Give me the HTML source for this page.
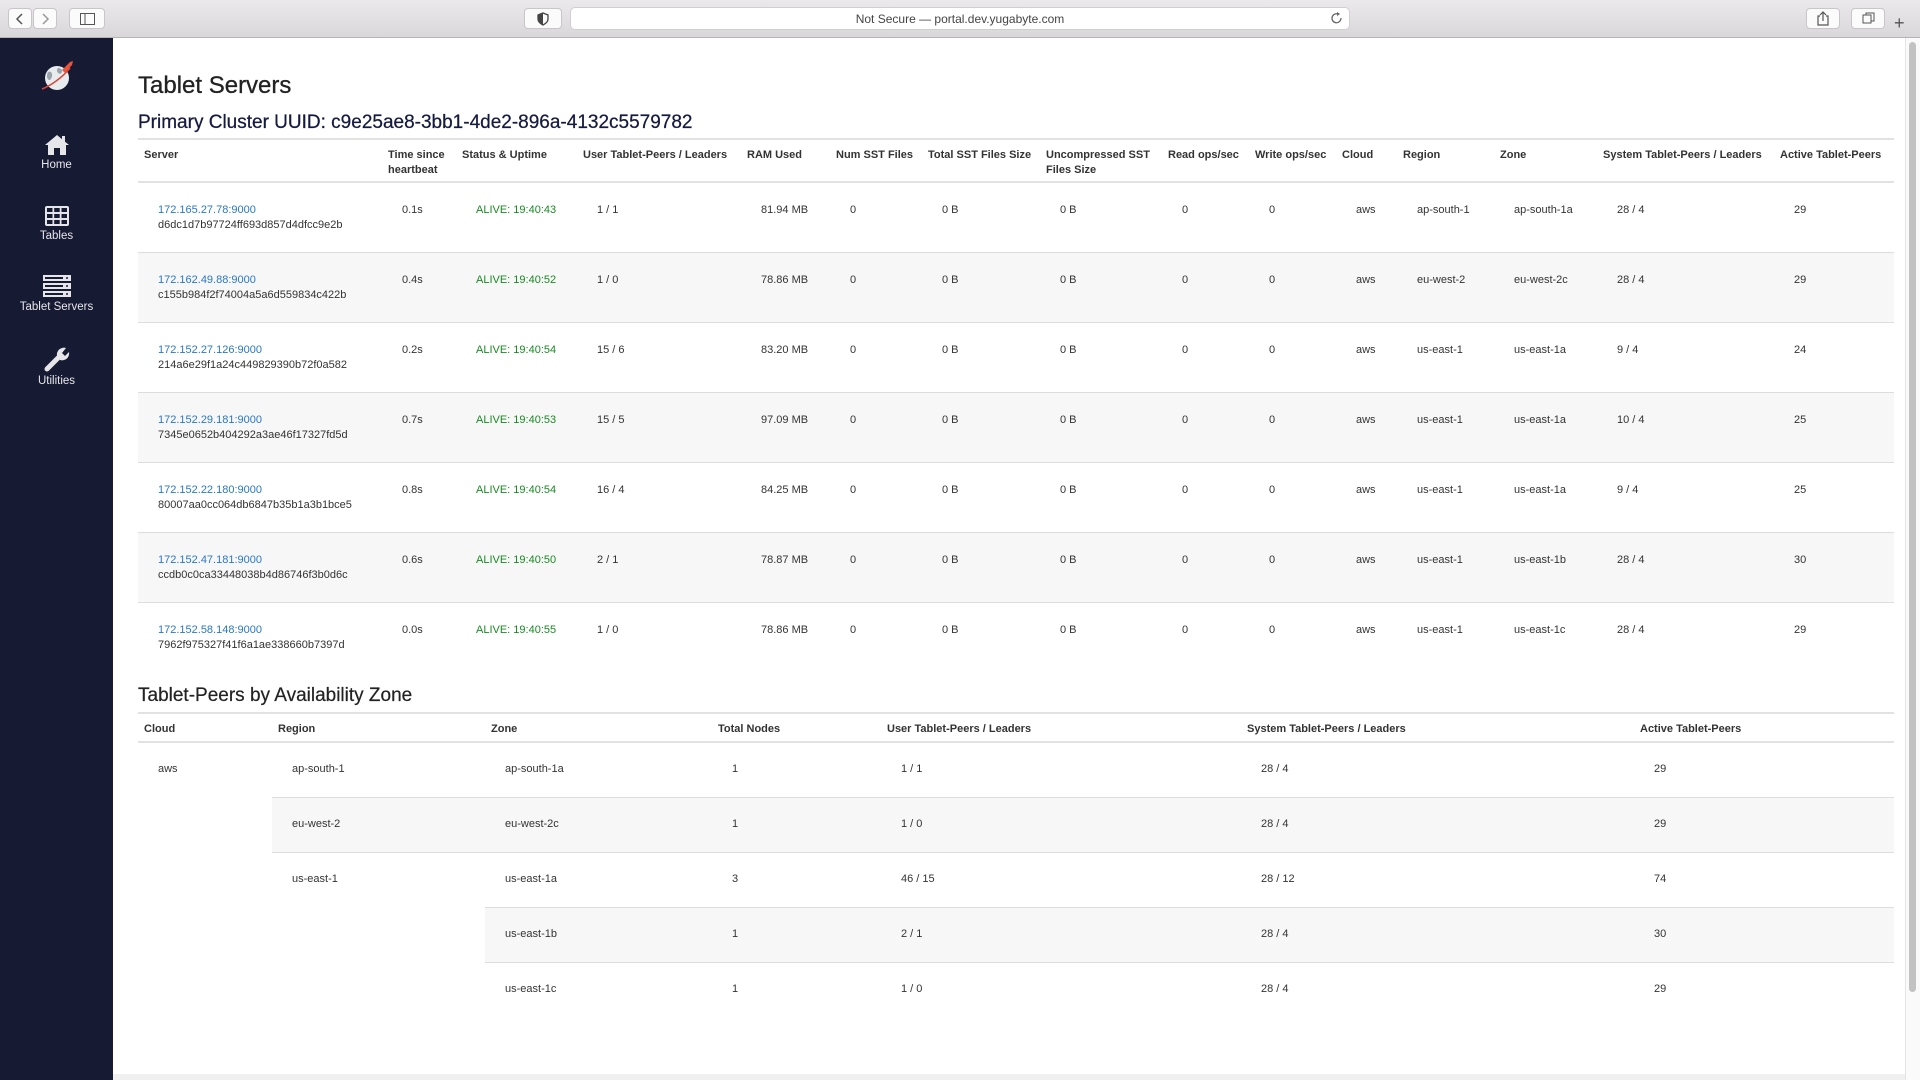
<!DOCTYPE html>
<html><head><meta charset="utf-8">
<style>
*{box-sizing:border-box;margin:0;padding:0}
body{width:1920px;height:1080px;overflow:hidden;background:#fff;font-family:"Liberation Sans",Arial,sans-serif;color:#333;position:relative}
.top{position:absolute;left:0;top:0;width:1920px;height:38px;background:linear-gradient(#ebe9eb,#d9d7d9);border-bottom:1px solid #b5b3b5}
.btn{position:absolute;top:8px;height:21px;background:#fbfbfb;border:1px solid #c8c6c8;border-radius:4px}
.url{position:absolute;left:570px;top:7px;width:780px;height:23px;background:#fff;border:1px solid #d0ced0;border-radius:5px;font-size:12px;color:#444;text-align:center;line-height:22px}
.side{position:absolute;left:0;top:38px;width:113px;height:1042px;background:#161a33}
.nav{position:absolute;left:0;width:113px;text-align:center;color:#e6e6ea;font-size:11.5px}
.nav svg{display:block;margin:0 auto 3px}
.sb{position:absolute;left:1905px;top:38px;width:15px;height:1042px;background:#fafafa;border-left:1px solid #e4e4e4}
.sb div{position:absolute;left:3px;top:4px;width:7px;height:950px;background:#c2c2c2;border-radius:4px}
h1{position:absolute;left:138px;top:72px;font-size:24px;font-weight:normal;color:#222;-webkit-text-stroke:.3px #222}
h2{position:absolute;left:138px;top:112px;font-size:19px;font-weight:normal;color:#151a40;-webkit-text-stroke:.25px #151a40}
h3{position:absolute;left:138px;top:685px;font-size:19px;font-weight:normal;color:#222;-webkit-text-stroke:.2px #222}
table{position:absolute;left:138px;border-collapse:collapse;table-layout:fixed;font-size:11px}
th{font-weight:bold;text-align:left;vertical-align:top;padding:8px 6px 0;color:#333;line-height:15px;font-size:11px}
thead tr{border-top:2px solid #e2e2e2;border-bottom:2px solid #e2e2e2}
#t1{top:138px;width:1756px}
#t1 thead tr{height:43px}
#t1 td{height:70px;padding-left:20px;padding-top:20px;vertical-align:top;border-top:1px solid #ddd;line-height:15px;color:#333}
#t1 tbody tr:nth-child(even) td{background:#f7f7f7}
a{color:#2a78c4;text-decoration:none}
#t1 td.g{color:#1a8a24}
#t2{top:712px;width:1756px}
#t2 thead tr{height:29px}
#t2 th{padding-top:8px}
#t2 td{height:55px;padding-left:20px;padding-bottom:2px;vertical-align:middle;border-top:1px solid #ddd;color:#333}
#t2 td.r{vertical-align:top;padding-top:20px;border-top:none}
#t2 tr.s td{background:#f7f7f7}
</style></head><body>
<div class="top">
 <div class="btn" style="left:8px;width:24px"></div><div class="btn" style="left:33px;width:24px"></div>
 <svg style="position:absolute;left:14px;top:12px" width="12" height="14"><path d="M8 2 L3 7 L8 12" stroke="#555" stroke-width="1.5" fill="none"/></svg>
 <svg style="position:absolute;left:40px;top:12px" width="12" height="14"><path d="M3 2 L8 7 L3 12" stroke="#999" stroke-width="1.5" fill="none"/></svg>
 <div class="btn" style="left:69px;width:36px"></div>
 <svg style="position:absolute;left:80px;top:13px" width="15" height="12"><rect x=".5" y=".5" width="14" height="11" fill="none" stroke="#555"/><line x1="5" y1="0" x2="5" y2="12" stroke="#555"/></svg>
 <div class="btn" style="left:524px;width:38px"></div>
 <svg style="position:absolute;left:537px;top:12px" width="12" height="14"><path d="M6 1 L11 3 V7 C11 10 8 12 6 13 C4 12 1 10 1 7 V3 Z" fill="none" stroke="#444" stroke-width="1.3"/><path d="M6 1 V13 C4 12 1 10 1 7 V3Z" fill="#444"/></svg>
 <div class="url">Not Secure — portal.dev.yugabyte.com</div>
 <svg style="position:absolute;left:1331px;top:12px" width="12" height="13"><path d="M10 6 A4.5 4.5 0 1 1 7 2" fill="none" stroke="#666" stroke-width="1.3"/><path d="M6 0 L9 2 L6 4Z" fill="#666"/></svg>
 <div class="btn" style="left:1806px;width:34px"></div><div class="btn" style="left:1851px;width:34px"></div>
 <svg style="position:absolute;left:1817px;top:11px" width="12" height="15"><path d="M3 5 H1 V14 H11 V5 H9 M6 10 V1 M3 4 L6 1 L9 4" fill="none" stroke="#555" stroke-width="1.2"/></svg>
 <svg style="position:absolute;left:1862px;top:12px" width="13" height="13"><rect x="1" y="3" width="8" height="8" fill="none" stroke="#555"/><path d="M4 3 V1 H12 V9 H9" fill="none" stroke="#555"/></svg>
 <div style="position:absolute;left:1894px;top:14px;font-size:18px;color:#555;line-height:18px">+</div>
</div>
<div class="side">
 <svg style="position:absolute;left:40px;top:22px" width="36" height="32" viewBox="0 0 36 32">
  <circle cx="17" cy="18" r="12" fill="#e8ecef"/><path d="M8 12 C12 10 14 16 10 20 C7 20 6 16 8 12Z M18 8 C22 8 24 12 20 14 C17 13 16 10 18 8Z" fill="#9aa4ab"/>
  <path d="M2 29 C10 26 22 18 30 8" stroke="#d9483b" stroke-width="1.5" fill="none"/><path d="M22 10 L30 2 L33 1 L32 5 L25 13Z" fill="#e8553e"/>
 </svg>
 <div class="nav" style="top:96px"><svg width="26" height="22" viewBox="0 0 26 22"><path d="M13 1 L1 11 H4 V21 H10 V14 H16 V21 H22 V11 H25Z" fill="#e6e6ea"/><rect x="18" y="2" width="3" height="6" fill="#e6e6ea"/></svg>Home</div>
 <div class="nav" style="top:167px"><svg width="26" height="22" viewBox="0 0 26 22"><rect x="1" y="1" width="24" height="20" rx="2" fill="#e6e6ea"/><g fill="#161a33"><rect x="3" y="3" width="5.5" height="4"/><rect x="10.2" y="3" width="5.5" height="4"/><rect x="17.5" y="3" width="5.5" height="4"/><rect x="3" y="9" width="5.5" height="4"/><rect x="10.2" y="9" width="5.5" height="4"/><rect x="17.5" y="9" width="5.5" height="4"/><rect x="3" y="15" width="5.5" height="4"/><rect x="10.2" y="15" width="5.5" height="4"/><rect x="17.5" y="15" width="5.5" height="4"/></g></svg>Tables</div>
 <div class="nav" style="top:236px"><svg width="28" height="24" viewBox="0 0 28 24"><g fill="#e6e6ea"><rect x="0" y="1" width="28" height="6"/><rect x="0" y="9" width="28" height="6"/><rect x="0" y="17" width="28" height="6"/></g><g fill="#161a33"><rect x="2" y="3" width="18" height="2"/><rect x="2" y="11" width="18" height="2"/><rect x="2" y="19" width="18" height="2"/><circle cx="24" cy="4" r="1"/><circle cx="24" cy="12" r="1"/><circle cx="24" cy="20" r="1"/></g></svg>Tablet Servers</div>
 <div class="nav" style="top:309px"><svg width="26" height="25" viewBox="0 0 26 25"><path d="M3 22 L14 11" stroke="#e6e6ea" stroke-width="5" stroke-linecap="round"/><path d="M13 9 A7 7 0 0 1 22 1 L18 6 L21 9 L25 5 A7 7 0 0 1 16 13Z" fill="#e6e6ea"/></svg>Utilities</div>
</div>
<div class="sb"><div></div></div>
<div style="position:absolute;left:113px;top:1074px;width:1792px;height:6px;background:#f0f0f0"></div>

<h1>Tablet Servers</h1>
<h2>Primary Cluster UUID: c9e25ae8-3bb1-4de2-896a-4132c5579782</h2>
<table id="t1">
<colgroup><col style="width:244px"><col style="width:74px"><col style="width:121px"><col style="width:164px"><col style="width:89px"><col style="width:92px"><col style="width:118px"><col style="width:122px"><col style="width:87px"><col style="width:87px"><col style="width:61px"><col style="width:97px"><col style="width:103px"><col style="width:177px"><col style="width:120px"></colgroup>
<thead><tr><th>Server</th><th>Time since heartbeat</th><th>Status &amp; Uptime</th><th>User Tablet-Peers / Leaders</th><th>RAM Used</th><th>Num SST Files</th><th>Total SST Files Size</th><th>Uncompressed SST Files Size</th><th>Read ops/sec</th><th>Write ops/sec</th><th>Cloud</th><th>Region</th><th>Zone</th><th>System Tablet-Peers / Leaders</th><th>Active Tablet-Peers</th></tr></thead>
<tbody>
<tr><td><a>172.165.27.78:9000</a><br>d6dc1d7b97724ff693d857d4dfcc9e2b</td><td>0.1s</td><td class="g">ALIVE: 19:40:43</td><td>1 / 1</td><td>81.94 MB</td><td>0</td><td>0 B</td><td>0 B</td><td>0</td><td>0</td><td>aws</td><td>ap-south-1</td><td>ap-south-1a</td><td>28 / 4</td><td>29</td></tr>
<tr><td><a>172.162.49.88:9000</a><br>c155b984f2f74004a5a6d559834c422b</td><td>0.4s</td><td class="g">ALIVE: 19:40:52</td><td>1 / 0</td><td>78.86 MB</td><td>0</td><td>0 B</td><td>0 B</td><td>0</td><td>0</td><td>aws</td><td>eu-west-2</td><td>eu-west-2c</td><td>28 / 4</td><td>29</td></tr>
<tr><td><a>172.152.27.126:9000</a><br>214a6e29f1a24c449829390b72f0a582</td><td>0.2s</td><td class="g">ALIVE: 19:40:54</td><td>15 / 6</td><td>83.20 MB</td><td>0</td><td>0 B</td><td>0 B</td><td>0</td><td>0</td><td>aws</td><td>us-east-1</td><td>us-east-1a</td><td>9 / 4</td><td>24</td></tr>
<tr><td><a>172.152.29.181:9000</a><br>7345e0652b404292a3ae46f17327fd5d</td><td>0.7s</td><td class="g">ALIVE: 19:40:53</td><td>15 / 5</td><td>97.09 MB</td><td>0</td><td>0 B</td><td>0 B</td><td>0</td><td>0</td><td>aws</td><td>us-east-1</td><td>us-east-1a</td><td>10 / 4</td><td>25</td></tr>
<tr><td><a>172.152.22.180:9000</a><br>80007aa0cc064db6847b35b1a3b1bce5</td><td>0.8s</td><td class="g">ALIVE: 19:40:54</td><td>16 / 4</td><td>84.25 MB</td><td>0</td><td>0 B</td><td>0 B</td><td>0</td><td>0</td><td>aws</td><td>us-east-1</td><td>us-east-1a</td><td>9 / 4</td><td>25</td></tr>
<tr><td><a>172.152.47.181:9000</a><br>ccdb0c0ca33448038b4d86746f3b0d6c</td><td>0.6s</td><td class="g">ALIVE: 19:40:50</td><td>2 / 1</td><td>78.87 MB</td><td>0</td><td>0 B</td><td>0 B</td><td>0</td><td>0</td><td>aws</td><td>us-east-1</td><td>us-east-1b</td><td>28 / 4</td><td>30</td></tr>
<tr><td><a>172.152.58.148:9000</a><br>7962f975327f41f6a1ae338660b7397d</td><td>0.0s</td><td class="g">ALIVE: 19:40:55</td><td>1 / 0</td><td>78.86 MB</td><td>0</td><td>0 B</td><td>0 B</td><td>0</td><td>0</td><td>aws</td><td>us-east-1</td><td>us-east-1c</td><td>28 / 4</td><td>29</td></tr>
</tbody></table>

<h3>Tablet-Peers by Availability Zone</h3>
<table id="t2">
<colgroup><col style="width:134px"><col style="width:213px"><col style="width:227px"><col style="width:169px"><col style="width:360px"><col style="width:393px"><col style="width:260px"></colgroup>
<thead><tr><th>Cloud</th><th>Region</th><th>Zone</th><th>Total Nodes</th><th>User Tablet-Peers / Leaders</th><th>System Tablet-Peers / Leaders</th><th>Active Tablet-Peers</th></tr></thead>
<tbody>
<tr><td class="r" rowspan="5">aws</td><td>ap-south-1</td><td>ap-south-1a</td><td>1</td><td>1 / 1</td><td>28 / 4</td><td>29</td></tr>
<tr class="s"><td>eu-west-2</td><td>eu-west-2c</td><td>1</td><td>1 / 0</td><td>28 / 4</td><td>29</td></tr>
<tr><td class="r" rowspan="3" style="border-top:1px solid #ddd">us-east-1</td><td>us-east-1a</td><td>3</td><td>46 / 15</td><td>28 / 12</td><td>74</td></tr>
<tr class="s"><td>us-east-1b</td><td>1</td><td>2 / 1</td><td>28 / 4</td><td>30</td></tr>
<tr><td>us-east-1c</td><td>1</td><td>1 / 0</td><td>28 / 4</td><td>29</td></tr>
</tbody></table>
</body></html>
